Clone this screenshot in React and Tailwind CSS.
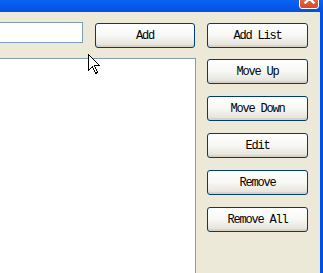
import React from "react";

const btn =
  "w-full h-[25px] rounded-[3px] border border-[#003C74] bg-gradient-to-b from-white via-[#F7F7F4] to-[#E3E0D6] text-black text-[12px] leading-none tracking-[-1.2px] flex items-center justify-center shadow-[inset_0_-2px_0_#D8D3C6]";

export default function App() {
  const font = { fontFamily: '"Liberation Mono", "DejaVu Sans Mono", monospace' };
  return (
    <div className="relative w-[323px] h-[273px] overflow-hidden bg-[#ECE9D8] flex flex-col" style={font}>
      {/* title bar */}
      <div className="h-[12px] shrink-0 bg-gradient-to-b from-[#0A62F5] to-[#0052E0] flex justify-end pr-[4px]">
        <div className="mt-[-12px] w-[20px] h-[21px] rounded-[3px] border border-white bg-gradient-to-b from-[#F08A60] to-[#D9471E] flex items-center justify-center">
          <svg width="11" height="11" viewBox="0 0 11 11">
            <path d="M1.5 1.5 L9.5 9.5 M9.5 1.5 L1.5 9.5" stroke="white" strokeWidth="2.4" strokeLinecap="square" />
          </svg>
        </div>
      </div>

      {/* body */}
      <div className="flex flex-1 min-h-0">
        <div className="ml-[-4px] w-[200px] flex flex-col shrink-0">
          <div className="flex items-start mt-[10px]">
            <div className="w-[87px] h-[21px] border border-[#7F9DB9] bg-white" />
            <div className="ml-[12px] mt-[1px] w-[100px]">
              <button className={btn}>Add</button>
            </div>
          </div>
          <div className="mt-[10px] h-[240px] border border-[#7F9DB9] bg-white shrink-0" />
        </div>

        <div className="ml-[11px] w-[101px] pt-[11px] flex flex-col shrink-0">
          <button className={btn}>Add List</button>
          <button className={btn + " mt-[11px]"}>Move Up</button>
          <button className={btn + " mt-[12px]"}>Move Down</button>
          <button className={btn + " mt-[12px]"}>Edit</button>
          <button className={btn + " mt-[12px]"}>Remove</button>
          <button className={btn + " mt-[12px]"}>Remove All</button>
        </div>

        <div className="flex-1" />
        <div className="w-[3px] bg-[#0050E6] shrink-0" />
      </div>

      {/* mouse cursor */}
      <svg className="absolute left-[88px] top-[54px]" width="13" height="21" viewBox="0 0 13 21" shapeRendering="crispEdges">
        <path d="M0.5 0.5 L0.5 16.5 L4.5 12.5 L7.5 19.5 L9.5 18.5 L6.5 11.5 L11.5 11.5 Z" fill="white" stroke="black" strokeWidth="1" />
      </svg>
    </div>
  );
}
